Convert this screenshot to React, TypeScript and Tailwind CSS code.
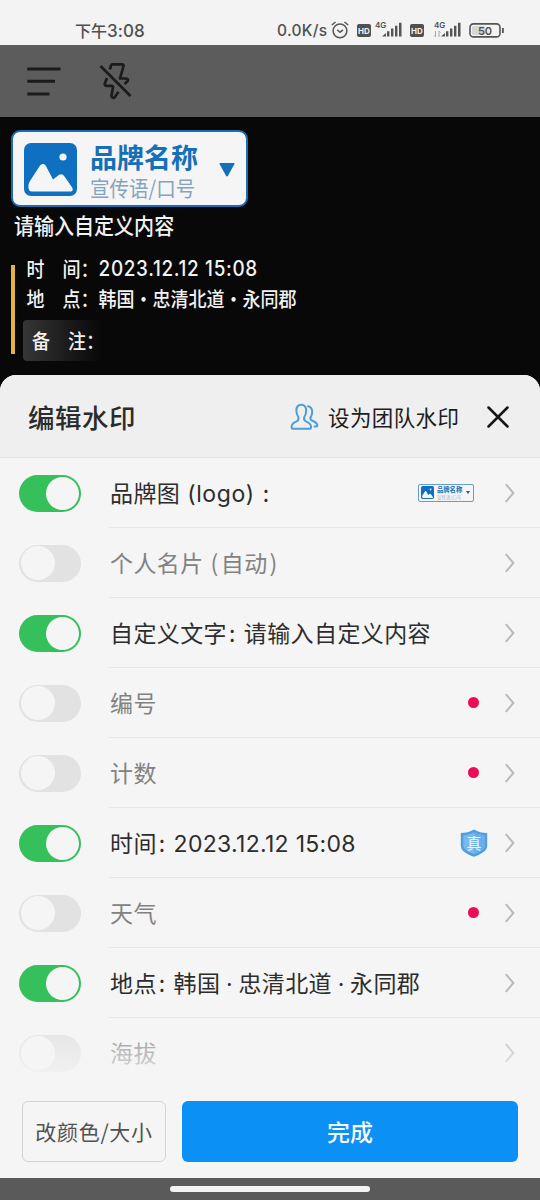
import React from 'react';

const cjk = "font-['Noto_Sans_CJK_SC','Noto_Sans',sans-serif]";
const latin = "font-['Inter','Noto_Sans_CJK_SC',sans-serif]";

function Colon() {
  return <span className="mr-[8px] ml-[2px]">:</span>;
}

function Middot() {
  return <span className="inline-block w-[18px] text-center font-['Inter',sans-serif] tracking-normal">·</span>;
}

function Toggle({ on }: { on: boolean }) {
  return on ? (
    <div className="flex h-[37px] w-[62px] shrink-0 items-center justify-end rounded-full bg-[#36c05c] pr-[2px]">
      <div className="size-[33px] rounded-full bg-[#f5f5f5]" />
    </div>
  ) : (
    <div className="flex h-[37px] w-[62px] shrink-0 items-center rounded-full bg-[#e2e2e2] pl-[2px]">
      <div className="size-[34px] rounded-full bg-[#f5f5f5]" />
    </div>
  );
}

function Chevron() {
  return (
    <svg className="h-[20px] w-[12px] shrink-0" viewBox="0 0 12 20" fill="none" stroke="#b9b9b9" strokeWidth="2">
      <path d="M1.8 1.2 9.4 10 1.8 18.8" />
    </svg>
  );
}

function PictureIcon({ className }: { className: string }) {
  return (
    <svg className={className} viewBox="0 0 53 53">
      <rect width="53" height="53" rx="7" fill="#0f6fc0" />
      <circle cx="39" cy="14" r="3.6" fill="#f5f5f5" />
      <path
        d="M4.5 44C4 42 5 40 6 38L16 22.500C17.800 20.300 20.200 20.300 21.800 22.800L29 36.500 34.500 32.200C37 30.500 38.500 31 40.500 33.500L47.500 43.500C49.500 46.500 49 48.500 46 48.500H8C5.500 48.500 4.500 47 4.500 44Z"
        fill="#f5f5f5"
      />
    </svg>
  );
}

function Shield() {
  return (
    <div className="relative flex h-[28px] w-[28px] items-center justify-center">
      <svg className="absolute inset-0 size-full" viewBox="0 0 28 28">
        <path d="M14 .5C10 3 5.500 4 .8 4V17C1 22.500 8 25.500 14 27.800 20 25.500 27 22.500 27.200 17V4C22.500 4 18 3 14 .5Z" fill="#4c9fe0" />
        <path d="M14 3.300C10.500 5 7 6.100 3.300 6.400V16.700C3.600 20.600 9 23 14 25 19 23 24.400 20.600 24.700 16.700V6.400C21 6.100 17.500 5 14 3.300Z" fill="#79b9ed" />
        <path d="M14 3.300V25C19 23 24.400 20.600 24.700 16.700V6.400C21 6.100 17.500 5 14 3.300Z" fill="#69aee8" />
      </svg>
      <span className={`relative text-[15px] leading-[20px] text-[#f0f6fb] ${cjk}`}>真</span>
    </div>
  );
}

function Signal() {
  return (
    <svg className="h-[15px] w-[20px]" viewBox="0 0 20 15" fill="#555">
      <path d="M0 14.500 4 11V14.500ZM5 9.200H7.400V14.500H5ZM9 6.500H11.400V14.500H9ZM13 3.800H15.400V14.500H13ZM17 .8H19.500V14.500H17Z" />
    </svg>
  );
}

function Hd() {
  return (
    <div className={`flex h-[13px] w-[14px] items-center justify-center rounded-[2px] bg-[#505050] text-[8px] leading-none font-bold text-[#f2f2f2] ${latin}`}>
      HD
    </div>
  );
}

function StatusBar() {
  return (
    <div className="flex h-[45px] bg-[#f3f3f3] pt-[19px] text-[#505050]">
      <div className={`-mt-[1px] ml-[75px] w-[202px] text-[16px] leading-[24px] font-medium whitespace-nowrap ${cjk}`}>
        下午<span className={`text-[17px] tracking-[0.100px] ${latin}`}>3:08</span>
      </div>
      <div className={`w-[54px] text-[15.500px] leading-[23px] font-medium tracking-[0.300px] whitespace-nowrap ${latin}`}>0.0K/s</div>
      <svg className="mt-[2px] h-[18px] w-[18px]" viewBox="0 0 18 18" fill="none" stroke="#555" strokeWidth="1.500">
        <circle cx="9" cy="9.800" r="6.900" />
        <path d="M.8 4 4.500 1M17.200 4 13.500 1M6.200 8.800 9 11.200 12 8.800" />
      </svg>
      <div className="ml-[8px] mt-[5px]"><Hd /></div>
      <div className="ml-[4px] flex w-[29px]">
        <span className={`w-[7px] text-[8px] leading-[12px] font-semibold ${latin}`}>4G</span>
        <div className="mt-[3px]"><Signal /></div>
      </div>
      <div className="mt-[5px] ml-[6px]"><Hd /></div>
      <div className="ml-[10px] flex w-[28px]">
        <div className="w-[7px]">
          <div className={`text-[8px] leading-[12px] font-semibold ${latin}`}>4G</div>
          <svg className="h-[6px] w-[7px]" viewBox="0 0 7 6" stroke="#aaa" strokeWidth="1" fill="none">
            <path d="M1.500 0V6M5 0V6M.5 4.500 1.500 6M5 0 6.500 1.500" />
          </svg>
        </div>
        <div className="mt-[3px]"><Signal /></div>
      </div>
      <svg className="ml-[7px] mt-[4px] h-[15px] w-[36px]" viewBox="0 0 36 15">
        <rect x="1" y=".9" width="30" height="13" rx="3.500" fill="none" stroke="#555" strokeWidth="1.600" />
        <rect x="3" y="3" width="13" height="9" rx="1.500" fill="#d6d6d6" />
        <rect x="33" y="5" width="1.800" height="5" fill="#555" />
        <text x="16" y="11.700" textAnchor="middle" fontFamily="Inter" fontWeight="600" fontSize="11" fill="#505050">50</text>
      </svg>
    </div>
  );
}

function TopBar() {
  return (
    <div className="flex h-[72px] items-start bg-[#5c5c5c]">
      <svg className="mt-[21px] ml-[26px] h-[32px] w-[36px]" viewBox="0 0 36 32" stroke="#1b1b1b" strokeWidth="3">
        <path d="M1.300 3H34.500M1.300 15.300H29M1.300 28H23.500" />
      </svg>
      <svg className="mt-[16px] ml-[37px] h-[40px] w-[34px]" viewBox="0 0 34 40" fill="none" stroke="#1b1b1b" strokeWidth="2.700" strokeLinejoin="round">
        <path d="M1.500 5 31.500 35" />
        <path d="M10.800 8.500 12 4.500Q12.300 3.300 13.500 3.300H23Q25 3.300 24.500 5.200L21 17.500H27Q30 18 28.500 20.300L25.500 23" />
        <path d="M8 17 5.800 22.500Q5.500 24.500 7.500 24.800H13Q14.300 25 14 26.500L12.500 34.500Q13 38 15.500 36.500L19.500 30.800" />
      </svg>
    </div>
  );
}

function Watermark() {
  return (
    <div className={`h-[258px] bg-[#080808] pt-[13px] pl-[11px] text-[#f2f2f2] ${cjk}`}>
      <div className="flex h-[77px] w-[237px] items-start rounded-[9px] border-2 border-[#1b6cb3] bg-[#f5f5f5] pt-[11px] pl-[11px]">
        <PictureIcon className="size-[53px]" />
        <div className="-mt-[1px] ml-[13px] w-[129px] whitespace-nowrap">
          <div className="h-[30px] text-[27px] leading-[30px] font-bold text-[#1570b8]">品牌名称</div>
          <div className="mt-[3px] h-[24px] origin-left scale-x-[0.93] text-[21px] leading-[24px] text-[#86a3bd]">宣传语/口号</div>
        </div>
        <svg className="mt-[20px] h-[14px] w-[16px]" viewBox="0 0 16 14" fill="#1570b8">
          <path d="M1.200 0H14.800Q16 0 15.300 1.300L9 12.800Q8 14 7 12.800L.7 1.300Q0 0 1.200 0Z" />
        </svg>
      </div>
      <div className="mt-[2px] ml-[3px] h-[30px] origin-left scale-x-[0.91] text-[22px] leading-[30px] font-medium whitespace-nowrap">请输入自定义内容</div>
      <div className="mt-[15px] flex">
        <div className="mt-[11px] h-[89px] w-[4px] bg-[#e5b143]" />
        <div className="ml-[8px] whitespace-nowrap text-[20px] leading-[30px] font-medium">
          <div className="flex h-[30px] origin-left scale-x-[0.9] pl-[4px]">
            <span className="w-[40px]">时</span><span className="w-[40px]">间：</span>
            <span className={`text-[21px] tracking-[0.750px] ${latin}`}>2023.12.12 15:08</span>
          </div>
          <div className="flex h-[30px] origin-left scale-x-[0.9] pl-[4px]">
            <span className="w-[40px]">地</span><span className="w-[40px]">点：</span>
            <span>韩国</span><span className="w-[20px] text-center">·</span><span>忠清北道</span><span className="w-[20px] text-center">·</span><span>永同郡</span>
          </div>
          <div className="mt-[6px] h-[41px] w-[80px] rounded-[4px] bg-linear-to-r from-[#363636] to-[#080808]">
            <div className="flex origin-left scale-x-[0.9] pl-[10px] leading-[41px]">
              <span className="w-[40px] shrink-0">备</span><span>注：</span>
            </div>
          </div>
        </div>
      </div>
    </div>
  );
}

function MiniLogo() {
  return (
    <div className={`flex h-[18px] w-[56px] items-center rounded-[2px] border border-[#6a9cc8] pl-[2px] ${cjk}`}>
      <PictureIcon className="size-[13px] shrink-0" />
      <div className="ml-[3px] w-[28px] whitespace-nowrap">
        <div className="text-[6.300px] leading-[8px] font-bold text-[#1570b8]">品牌名称</div>
        <div className="text-[4.500px] leading-[6px] text-[#9ab0c4]">宣传语/口号</div>
      </div>
      <svg className="ml-[1px] h-[3px] w-[4px]" viewBox="0 0 4 3" fill="#1b5c94"><path d="M0 0H4L2 3Z" /></svg>
    </div>
  );
}

function Dot() {
  return <div className="mr-[9px] size-[11px] rounded-full bg-[#ea0c55]" />;
}

type Item = { on: boolean; label: React.ReactNode; extra?: React.ReactNode };

const items: Item[] = [
  { on: true, label: <>品牌图<span className={`mr-[3px] ml-[7px] tracking-[0.600px] ${latin}`}>(logo)</span><span className="ml-[5px]">:</span></>, extra: <div className="mr-[14px]"><MiniLogo /></div> },
  { on: false, label: <>个人名片<span className="mr-[2px] ml-[7px]">(</span>自动<span className="ml-[2px]">)</span></> },
  { on: true, label: <>自定义文字<Colon />请输入自定义内容</> },
  { on: false, label: '编号', extra: <Dot /> },
  { on: false, label: '计数', extra: <Dot /> },
  { on: true, label: <>时间<Colon /><span className={`text-[23px] tracking-[0.300px] ${latin}`}>2023.12.12 15:08</span></>, extra: <Shield /> },
  { on: false, label: '天气', extra: <Dot /> },
  { on: true, label: <>地点<Colon />韩国<Middot />忠清北道<Middot />永同郡</> },
  { on: false, label: '海拔' },
];

function Row({ item, last }: { item: Item; last: boolean }) {
  return (
    <div className="flex h-[70px] items-center pl-[19px]">
      <Toggle on={item.on} />
      <div className={`ml-[28px] flex h-[70px] flex-1 items-center justify-between border-b pr-[24px] pl-[1px] ${last ? 'border-transparent' : 'border-[#e7e7e7]'}`}>
        <div className={`h-[35px] text-[23px] leading-[34px] tracking-[0.400px] whitespace-nowrap ${cjk} ${item.on ? 'text-[#2d2d2d]' : 'text-[#828282]'}`}>
          {item.label}
        </div>
        <div className="flex items-center">
          {item.extra}
          <div className="ml-[16px] flex"><Chevron /></div>
        </div>
      </div>
    </div>
  );
}

function Sheet() {
  return (
    <div className="flex h-[803px] flex-col rounded-t-[16px] bg-[#f5f5f5]">
      <div className={`flex h-[83px] shrink-0 items-center rounded-t-[16px] border-b border-[#e4e4e4] bg-[#efefef] pt-[2px] pl-[28px] ${cjk}`}>
        <div className="w-[262px] text-[26.500px] leading-[40px] font-medium tracking-[0.500px] text-[#2b2b2b]">编辑水印</div>
        <svg className="h-[28px] w-[30px]" viewBox="0 0 30 28" fill="none" stroke="#4a9fd8" strokeWidth="2" strokeLinejoin="round" strokeLinecap="round">
          <path d="M11.300 1.800C8 1.800 6.400 4 6.400 7.500 6.400 10.500 7.300 12.500 8.300 14 9 16.200 8.200 17.600 6.500 18.400 3.500 19.700 1.800 21 1.600 23.500 1.500 25.200 2 25.800 3.500 25.800H19C20.700 25.800 21.200 25.200 21 23.500 20.800 21 19 19.700 16 18.400 14.400 17.600 13.600 16.200 14.300 14 15.300 12.500 16.200 10.500 16.200 7.500 16.200 4 14.600 1.800 11.300 1.800Z" />
          <path d="M18 3.200C20.800 3.800 22.200 6 22.200 9 22.200 11.300 21.500 13 20.500 14.400 20 16 20.500 16.800 22 17.500 25 18.800 27 20.200 27.300 22 27.400 23 26.800 23.400 25.500 23.400H24.500" />
        </svg>
        <div className="ml-[8px] w-[151px] text-[21.500px] leading-[34px] tracking-[0.400px] text-[#1d1d1d]">设为团队水印</div>
        <svg className="ml-[8px] size-[22px]" viewBox="0 0 22 22" stroke="#161616" strokeWidth="2.500" strokeLinecap="round">
          <path d="M1.500 1.500 20.500 20.500M20.500 1.500 1.500 20.500" />
        </svg>
      </div>
      <div className="relative h-[630px] shrink-0">
        {items.map((item, i) => <Row key={i} item={item} last={i === items.length - 1} />)}
        <div className="pointer-events-none absolute inset-x-0 bottom-0 h-[62px] bg-linear-to-b from-[#f5f5f5]/10 to-[#f5f5f5]" />
      </div>
      <div className={`mt-[13px] flex pl-[22px] ${cjk}`}>
        <button className="h-[61px] w-[144px] rounded-[6px] border border-[#d3d3d3] text-[21px] tracking-[0.700px] whitespace-nowrap text-[#515151]">改颜色/大小</button>
        <button className="ml-[16px] h-[61px] w-[336px] rounded-[6px] bg-[#0b90f6] text-[23px] font-medium text-[#f5f9fc]">完成</button>
      </div>
    </div>
  );
}

export default function App() {
  return (
    <div className="h-[1200px] w-[540px] overflow-hidden bg-[#080808]">
      <StatusBar />
      <TopBar />
      <Watermark />
      <Sheet />
      <div className="flex h-[22px] justify-center bg-[#5a5a5a] pt-[8px]">
        <div className="h-[6px] w-[200px] rounded-full bg-[#f3f3f3]" />
      </div>
    </div>
  );
}
